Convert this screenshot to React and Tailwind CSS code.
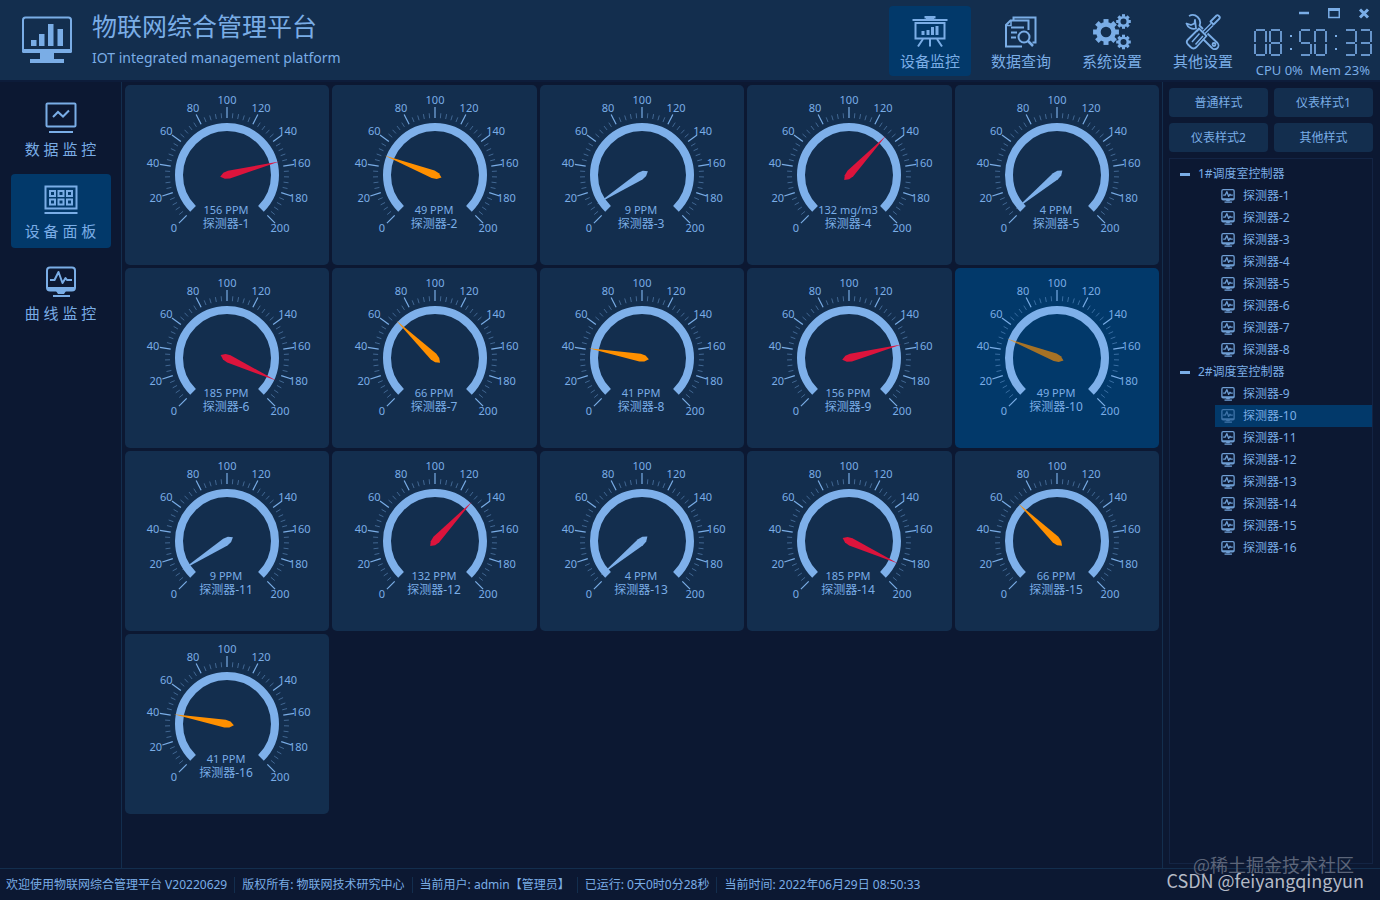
import React, { useState } from 'react';
import clsx from 'clsx';

const detectors = [156, 49, 9, 132, 4, 185, 66, 41, 156, 49, 9, 132, 4, 185, 66, 41].map((value, i) => ({
  id: i + 1,
  name: `探测器-${i + 1}`,
  value,
  unit: i === 3 ? 'mg/m3' : 'PPM',
}));

const groups = [
  { name: '1#调度室控制器', items: detectors.slice(0, 8) },
  { name: '2#调度室控制器', items: detectors.slice(8) },
];

const statusItems = [
  '欢迎使用物联网综合管理平台 V20220629',
  '版权所有: 物联网技术研究中心',
  '当前用户: admin【管理员】',
  '已运行: 0天0时0分28秒',
  '当前时间: 2022年06月29日 08:50:33',
];

/* ---------- icons ---------- */

const LogoIcon = () => (
  <svg width="50" height="48" viewBox="0 0 50 48" fill="currentColor">
    <rect x="1" y="1.5" width="48" height="34" rx="2.5" fill="none" stroke="currentColor" strokeWidth="2" />
    <rect x="0" y="33" width="50" height="4" rx="1.5" />
    <rect x="9" y="24" width="5.5" height="6" />
    <rect x="17" y="18" width="5.5" height="12" />
    <rect x="26" y="8" width="5.5" height="22" />
    <rect x="35.5" y="13" width="5.5" height="17" />
    <path d="M18 37h14v6h10v4H8v-4h10z" />
  </svg>
);

const BoardIcon = () => (
  <svg width="36" height="32" viewBox="0 0 36 32" fill="none" stroke="currentColor" strokeWidth="2">
    <path d="M0.5 4h35" />
    <path d="M14 2.5V1.5h8v1" strokeWidth="3" />
    <path d="M3.5 7v15.5h29V7z" />
    <path d="M11 23l-5 7.5M25 23l5 7.5M18 23v7.5" />
    <path d="M11 15v4M16 14v5M20.5 11v8M25 10v9" strokeWidth="3" />
  </svg>
);

const QueryIcon = () => (
  <svg width="34" height="32" viewBox="0 0 34 32" fill="none" stroke="currentColor" strokeWidth="2">
    <path d="M9.5 4V1.5H31.5V26.5H28.5" />
    <path d="M18 30.5H2V9l4.5-4.5H24.5V14" />
    <path d="M2 9.5h5V5" strokeWidth="1.5" />
    <path d="M7 11.500h13M7 16.500h6M7 21.500h5" />
    <circle cx="20" cy="21" r="5.500" />
    <path d="M24 25l5 5" strokeWidth="2.5" />
  </svg>
);

const toothAngles = [0, 45, 90, 135, 180, 225, 270, 315];

const Gear = ({ x, y, r, tooth }) => (
  <g transform={`translate(${x} ${y})`}>
    <circle r={r} fill="none" stroke="currentColor" strokeWidth={r * 0.6} />
    {toothAngles.map((a) => (
      <rect key={a} x={-tooth / 2} y={-r * 1.7} width={tooth} height={r * 0.6} fill="currentColor" transform={`rotate(${a})`} />
    ))}
  </g>
);

const GearsIcon = () => (
  <svg width="38" height="36" viewBox="0 0 38 36">
    <Gear x={13} y={18} r={7.6} tooth={5} />
    <Gear x={30.5} y={7.5} r={4.3} tooth={3} />
    <Gear x={30.5} y={28} r={4.3} tooth={3} />
  </svg>
);

const ToolsIcon = () => (
  <svg width="36" height="36" viewBox="0 0 36 36" fill="none" stroke="currentColor" strokeWidth="1.8" strokeLinejoin="round">
    <path d="M4 2a7.500 7.500 0 0 1 10.500 9.500l3.500 3.500M11 14.500A7.500 7.500 0 0 1 1.500 9.500l4.500 1.500 3.500-1.500.5-3.500z" />
    <path d="M22.500 19.500l10 9.500a3.700 3.700 0 0 1-5.500 5L18 25" />
    <circle cx="29" cy="30.500" r="1.500" />
    <path d="M14 14.500l7.500 7.500L11.500 33c-2 2-4 2-6 0l-2.500-2.500c-1.500-1.500-1.500-3.500 0-5z" />
    <path d="M14.500 19.500L7 28M18 22l-7.500 8.500M11.500 17.500L14.500 14.500" strokeWidth="1.500" />
    <path d="M18 17.500l8-8M20 19.500l8-8" strokeWidth="1.400" />
    <path d="M25.500 7.500L31.500 1.500q1-.8 2 .2l.8.8q1 1 .2 2L28.500 10.500z" />
  </svg>
);

const ChartScreenIcon = () => (
  <svg width="32" height="32" viewBox="0 0 32 32" fill="none" stroke="currentColor" strokeWidth="2">
    <rect x="1.5" y="1.5" width="29" height="23" rx="1" />
    <path d="M8 15l5-5 5 4.500 6-6M4 30h24" />
  </svg>
);

const PanelIcon = () => (
  <svg width="34" height="30" viewBox="0 0 34 30" fill="none" stroke="currentColor" strokeWidth="2">
    <rect x="1.5" y="1.5" width="31" height="22" />
    <path d="M6 6h5v5H6zM14.500 6h5v5h-5zM23 6h5v5h-5zM6 14.500h5v5H6zM14.500 14.500h5v5h-5zM23 14.500h5v5h-5zM0.500 28h33" />
  </svg>
);

const PulseIcon = ({ size = 32, stroke = 2, className }) => (
  <svg width={size} height={size} viewBox="0 0 32 32" fill="none" stroke="currentColor" strokeWidth={stroke} className={className}>
    <rect x="2" y="1.5" width="28" height="23" rx="3" />
    <path d="M5 14h4.500l4-8 4 11 3-5 1.500 2H27" strokeLinejoin="round" />
    <path d="M2 21h28v3l-3 1h-6l-2 3h-6l-2-3H5l-3-1z" fill="currentColor" stroke="none" />
    <path d="M8 30h17" />
  </svg>
);

/* ---------- clock ---------- */

// segment order: top, top-left, top-right, middle, bottom-left, bottom-right, bottom
const SEGMENTS = {
  0: [1, 1, 1, 0, 1, 1, 1],
  1: [0, 0, 1, 0, 0, 1, 0],
  2: [1, 0, 1, 1, 1, 0, 1],
  3: [1, 0, 1, 1, 0, 1, 1],
  4: [0, 1, 1, 1, 0, 1, 0],
  5: [1, 1, 0, 1, 0, 1, 1],
  6: [1, 1, 0, 1, 1, 1, 1],
  7: [1, 0, 1, 0, 0, 1, 0],
  8: [1, 1, 1, 1, 1, 1, 1],
  9: [1, 1, 1, 1, 0, 1, 1],
};

const Bar = ({ on }) => <span className={clsx('mx-0.5 h-0.5', on && 'bg-[#6795cb]')} />;

const Sides = ({ left, right }) => (
  <span className="flex flex-1 justify-between">
    <span className={clsx('w-0.5', left && 'bg-[#6795cb]')} />
    <span className={clsx('w-0.5', right && 'bg-[#6795cb]')} />
  </span>
);

const Digit = ({ char }) => {
  if (char === ':') {
    return (
      <span className="flex h-[27px] w-[13px] flex-col items-center justify-between py-1.5">
        <span className="size-0.5 bg-[#7aade6]" />
        <span className="size-0.5 bg-[#7aade6]" />
      </span>
    );
  }
  const s = SEGMENTS[char];
  return (
    <span className="flex h-[27px] w-[13px] flex-col">
      <Bar on={s[0]} />
      <Sides left={s[1]} right={s[2]} />
      <Bar on={s[3]} />
      <Sides left={s[4]} right={s[5]} />
      <Bar on={s[6]} />
    </span>
  );
};

const Clock = ({ time }) => (
  <div role="timer" aria-label={time} className="flex gap-0.5 pr-0.5">
    {time.split('').map((char, i) => (
      <Digit key={i} char={char} />
    ))}
  </div>
);

/* ---------- gauge ---------- */

const polar = (value, r) => {
  const a = ((135 + value * 1.35) * Math.PI) / 180;
  return [r * Math.cos(a), r * Math.sin(a)];
};

const needleColor = (value) => {
  if (value > 100) return '#dc143c';
  if (value > 20) return '#ff9000';
  return '#7eb0ea';
};

const ticks = Array.from({ length: 51 }, (_, i) => i * 4);
const labels = Array.from({ length: 11 }, (_, i) => i * 20);

const Gauge = ({ detector, selected, onSelect }) => {
  const [sx, sy] = polar(0, 48);
  const [ex, ey] = polar(200, 48);
  return (
    <button
      type="button"
      onClick={onSelect}
      className={clsx('flex h-[180px] items-start justify-center rounded-[5px]', selected ? 'bg-[#02396a]' : 'bg-[#132e4e]')}
    >
      <svg width="180" height="180" viewBox="-90 -90 180 180" fill="#7aade6">
        {ticks.map((t) => {
          const major = t % 20 === 0;
          const [x1, y1] = polar(t, 57);
          const [x2, y2] = polar(t, major ? 68 : 62);
          return <line key={t} x1={x1} y1={y1} x2={x2} y2={y2} stroke="#7aade6" strokeWidth={major ? 1.2 : 1} opacity={major ? 1 : 0.45} />;
        })}
        <path d={`M${sx} ${sy}A48 48 0 1 1 ${ex} ${ey}`} fill="none" stroke="#7eb0ea" strokeWidth="8" />
        {labels.map((t) => {
          const [x, y] = polar(t, 75);
          return (
            <text key={t} x={x} y={y + 4} textAnchor="middle" fontSize="11">
              {t}
            </text>
          );
        })}
        <polygon
          points="-7,0 -3,-3 2,-4 54,0 2,4 -3,3"
          fill={needleColor(detector.value)}
          opacity={selected ? 0.65 : 1}
          transform={`rotate(${135 + detector.value * 1.35})`}
        />
        <text x="-1" y="39" textAnchor="middle" fontSize="11">
          {detector.value} {detector.unit}
        </text>
        <text x="-1" y="53" textAnchor="middle" fontSize="12">
          {detector.name}
        </text>
      </svg>
    </button>
  );
};

/* ---------- navigation ---------- */

const topNav = [
  { label: '设备监控', Icon: BoardIcon },
  { label: '数据查询', Icon: QueryIcon },
  { label: '系统设置', Icon: GearsIcon },
  { label: '其他设置', Icon: ToolsIcon },
];

const sideNav = [
  { label: '数 据 监 控', Icon: ChartScreenIcon },
  { label: '设 备 面 板', Icon: PanelIcon },
  { label: '曲 线 监 控', Icon: PulseIcon },
];

const Header = () => {
  const [active, setActive] = useState(0);
  return (
    <header className="flex h-[82px] shrink-0 justify-between border-b-2 border-[#0d1c3a] bg-[#132e4e]">
      <div className="flex items-start gap-5 pt-4 pl-[22px]">
        <LogoIcon />
        <div className="-mt-2">
          <h1 className="text-[25px] leading-9">物联网综合管理平台</h1>
          <p className="text-sm leading-7">IOT integrated management platform</p>
        </div>
      </div>
      <div className="flex pr-1.5">
        <nav className="flex gap-[9px] pt-1.5">
          {topNav.map(({ label, Icon }, i) => (
            <button
              key={label}
              type="button"
              onClick={() => setActive(i)}
              className={clsx('flex h-[70px] w-[82px] flex-col items-center rounded pt-1.5', active === i && 'bg-[#02396a]')}
            >
              <span className="flex h-10 items-center">
                <Icon />
              </span>
              <span className="text-[15px] leading-[18px]">{label}</span>
            </button>
          ))}
        </nav>
        <div className="flex w-[130px] flex-col items-end">
          <div className="flex h-[29px] items-start gap-[18px] pt-[7px] pr-1">
            <button type="button" aria-label="最小化" className="h-3 w-3">
              <svg width="12" height="12" viewBox="0 0 12 12" stroke="currentColor" strokeWidth="2.500">
                <path d="M1 6h10" />
              </svg>
            </button>
            <button type="button" aria-label="最大化" className="h-3 w-3">
              <svg width="12" height="12" viewBox="0 0 12 12" fill="none" stroke="currentColor" strokeWidth="1.500">
                <path d="M.8 2h10.500v8.500H.8z" />
                <path d="M0 2.500h12" strokeWidth="3" />
              </svg>
            </button>
            <button type="button" aria-label="关闭" className="h-3 w-3">
              <svg width="12" height="12" viewBox="0 0 12 12" stroke="currentColor" strokeWidth="3">
                <path d="M2 2.500l8 8M10 2.500l-8 8" />
              </svg>
            </button>
          </div>
          <Clock time="08:50:33" />
          <p className="mt-1.5 pr-1 text-[13px] leading-4 whitespace-pre">CPU 0%  Mem 23%</p>
        </div>
      </div>
    </header>
  );
};

const SideBar = () => {
  const [active, setActive] = useState(1);
  return (
    <nav className="flex w-[122px] shrink-0 flex-col items-center gap-2 border-r border-[#132e4e] pt-2.5">
      {sideNav.map(({ label, Icon }, i) => (
        <button
          key={label}
          type="button"
          onClick={() => setActive(i)}
          className={clsx('flex h-[74px] w-[100px] flex-col items-center rounded-sm pt-2', active === i && 'bg-[#02396a]')}
        >
          <span className="flex h-9 items-center">
            <Icon />
          </span>
          <span className="mt-1 text-[15px] leading-[18px]">{label}</span>
        </button>
      ))}
    </nav>
  );
};

const styles = ['普通样式', '仪表样式1', '仪表样式2', '其他样式'];

const TreePanel = ({ selected, onSelect }) => (
  <aside className="flex w-[218px] shrink-0 flex-col gap-1.5 border-l border-[#132e4e] pt-1.5 pr-[7px] pb-1 pl-1.5">
    <div className="grid grid-cols-2 gap-1.5">
      {styles.map((label) => (
        <button key={label} type="button" className="h-[29px] rounded bg-[#132e4e] text-xs">
          {label}
        </button>
      ))}
    </div>
    <div className="flex-1 border border-[#132444] pt-1">
      {groups.map((group) => (
        <div key={group.name} className="text-xs leading-[22px]">
          <div className="flex items-center gap-2 pl-2.5">
            <span className="h-[3px] w-2.5 bg-[#7aade6]" />
            {group.name}
          </div>
          <ul>
            {group.items.map((d) => (
              <li key={d.id} className="pl-[45px]">
                <button
                  type="button"
                  onClick={() => onSelect(d.id)}
                  className={clsx('flex h-[22px] w-full items-center gap-2 pl-1.5', selected === d.id && 'bg-[#02396a]')}
                >
                  <PulseIcon size={14} stroke={3} className={selected === d.id ? 'opacity-50' : 'opacity-90'} />
                  {d.name}
                </button>
              </li>
            ))}
          </ul>
        </div>
      ))}
    </div>
  </aside>
);

const App = () => {
  const [selected, setSelected] = useState(10);

  return (
    <div className="relative flex min-h-screen flex-col bg-[#0c1832] font-['Noto_Sans','Noto_Sans_CJK_SC',sans-serif] text-[#7aade6]">
      <Header />
      <div className="flex flex-1">
        <SideBar />
        <main className="grid flex-1 grid-cols-5 content-start gap-[3px] p-[3px]">
          {detectors.map((d) => (
            <Gauge key={d.id} detector={d} selected={selected === d.id} onSelect={() => setSelected(d.id)} />
          ))}
        </main>
        <TreePanel selected={selected} onSelect={setSelected} />
      </div>
      <footer className="flex h-8 items-center border-t border-[#132e4e] pt-px text-xs">
        {statusItems.map((item) => (
          <span key={item} className="border-r border-[#132e4e] px-[7px] first:pl-1.5 last:border-r-0">
            {item}
          </span>
        ))}
      </footer>

      {/* Watermark */}
      <div className="pointer-events-none absolute right-4 bottom-3 text-right font-['Noto_Sans_CJK_SC',sans-serif]">
        <p className="pr-2.5 text-lg leading-4 text-[#5c6579]">@稀土掘金技术社区</p>
        <p className="text-lg leading-4 text-[#b4bac6]">CSDN @feiyangqingyun</p>
      </div>
    </div>
  );
};

export default App;
